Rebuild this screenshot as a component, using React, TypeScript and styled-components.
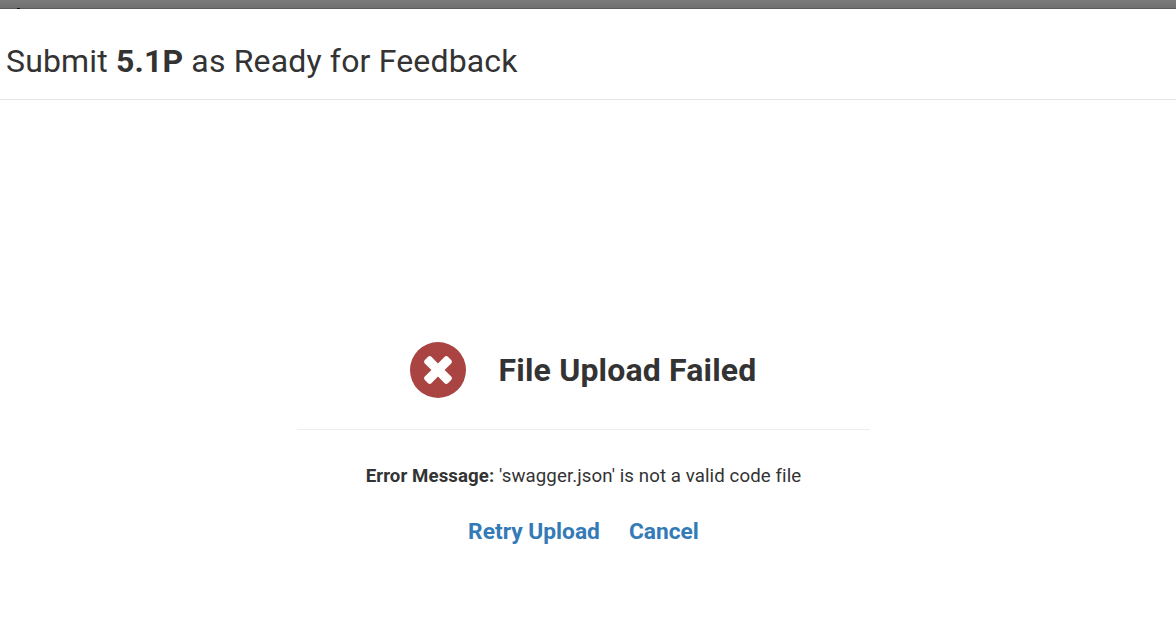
import React from 'react';
import styled, { createGlobalStyle } from 'styled-components';

const GlobalStyle = createGlobalStyle`
  * { box-sizing: border-box; }
  body { margin: 0; background: #fff; color: #333; font-family: Roboto, sans-serif; overflow: hidden; }
`;

const Page = styled.div`
  height: 642px;
  display: flex;
  flex-direction: column;
`;

const Backdrop = styled.div`
  height: 9px;
  display: flex;
  align-items: flex-end;
  padding-left: 17px;
  background: linear-gradient(#7b7b7b, #707070);
  border-bottom: 1px solid #5c5c5c;
`;

const BackdropMark = styled.span`
  width: 3px;
  height: 1px;
  margin-bottom: -1px;
  background: #111;
`;

const Header = styled.header`
  height: 91px;
  padding: 33px 6px 0;
  border-bottom: 1px solid #e5e5e5;
`;

const Title = styled.h3`
  margin: 0;
  font-size: 32px;
  font-weight: 400;
  line-height: 38px;
  letter-spacing: 0.16px;
  white-space: nowrap;
`;

const Body = styled.main`
  width: 573px;
  margin: 242px 0 0 297px;
  display: flex;
  flex-direction: column;
  align-items: center;
`;

const Status = styled.div`
  width: 100%;
  height: 88px;
  display: flex;
  justify-content: center;
  gap: 33px;
  border-bottom: 1px solid #eee;
`;

const Icon = styled.svg`
  width: 56px;
  height: 56px;
  margin-left: -1px;
  fill: #a94442;
`;

const Heading = styled.h4`
  margin: 0;
  font-size: 32px;
  font-weight: 700;
  line-height: 56px;
  letter-spacing: 0.17px;
  white-space: nowrap;
`;

const Message = styled.p`
  margin: 34px 0 0;
  font-size: 18.67px;
  line-height: 24px;
  letter-spacing: 0.09px;
  white-space: nowrap;
`;

const Actions = styled.div`
  margin-top: 29px;
  display: flex;
  gap: 29px;
`;

const Action = styled.a`
  color: #337ab7;
  font-size: 22.75px;
  font-weight: 700;
  line-height: 30px;
  white-space: nowrap;
`;

export default function App() {
  return (
    <Page>
      <GlobalStyle />
      <Backdrop>
        <BackdropMark />
      </Backdrop>
      <Header>
        <Title>Submit <b>5.1P</b> as Ready for Feedback</Title>
      </Header>
      <Body>
        <Status>
          <Icon viewBox="0 -128 1536 1536">
            <path
              fillRule="evenodd"
              d="M1149 414q0 26 -19 45l-181 181l181 181q19 19 19 45q0 27 -19 46l-90 90q-19 19 -46 19q-26 0 -45 -19l-181 -181l-181 181q-19 19 -45 19q-27 0 -46 -19l-90 -90q-19 -19 -19 -46q0 -26 19 -45l181 -181l-181 -181q-19 -19 -19 -45q0 -27 19 -46l90 -90q19 -19 46 -19q26 0 45 19l181 181l181 -181q19 -19 45 -19q27 0 46 19l90 90q19 19 19 46zM1536 640a768 768 0 1 0 -1536 0a768 768 0 1 0 1536 0z"
            />
          </Icon>
          <Heading>File Upload Failed</Heading>
        </Status>
        <Message><b>Error Message:</b> 'swagger.json' is not a valid code file</Message>
        <Actions>
          <Action>Retry Upload</Action>
          <Action>Cancel</Action>
        </Actions>
      </Body>
    </Page>
  );
}
